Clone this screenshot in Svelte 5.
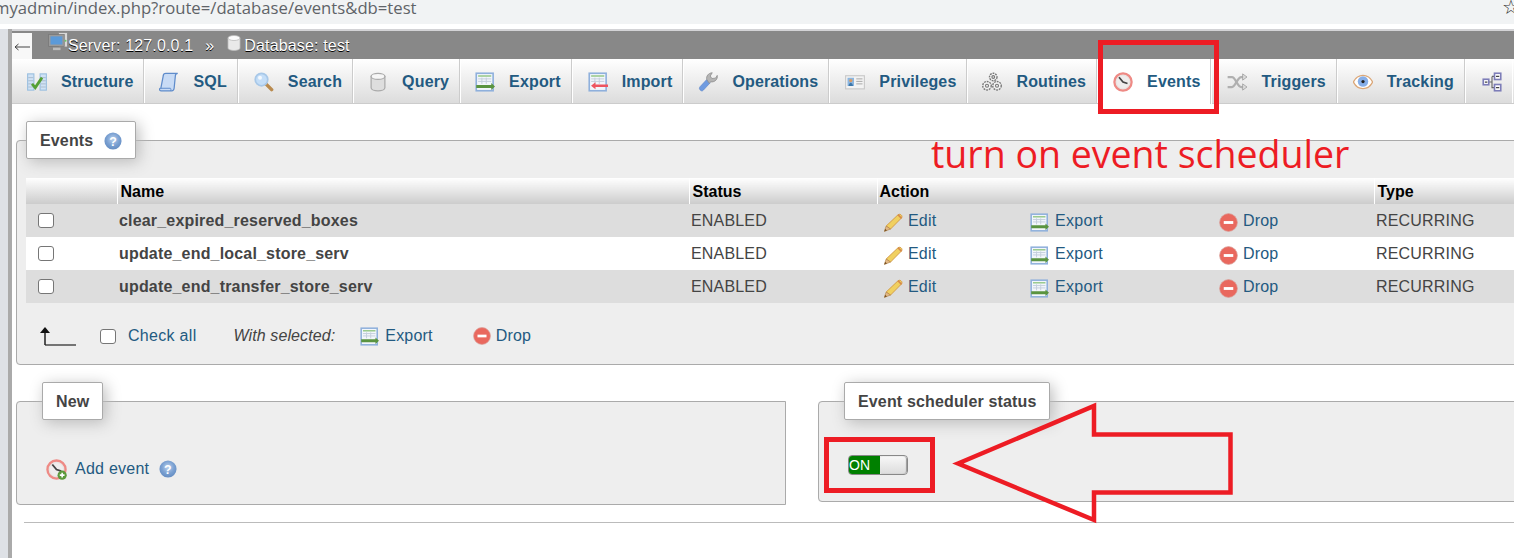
<script>
  const tabs = [
    ['Structure', 'structure'], ['SQL', 'sql'], ['Search', 'search'], ['Query', 'query'],
    ['Export', 'export'], ['Import', 'import'], ['Operations', 'operations'],
    ['Privileges', 'privileges'], ['Routines', 'routines'], ['Events', 'events'],
    ['Triggers', 'triggers'], ['Tracking', 'tracking']
  ];
  const events = ['clear_expired_reserved_boxes', 'update_end_local_store_serv', 'update_end_transfer_store_serv'];
</script>

{#snippet tableIcon(arrow)}
  <rect x="1" y="1" width="13.5" height="14" fill="#f2f6fb" stroke="#8fb0dc" stroke-width="1.3"/>
  <path d="M2.500 3.200h10.500" stroke="#8cc47c" stroke-width="1.100"/>
  <path d="M2.500 5.500h10.500M2.500 7.500h10.500M5.500 4.500v5M9 4.500v5" stroke="#c4cfdc" stroke-width=".8"/>
  {#if arrow === 'right'}
    <path d="M1 10.400h12V8.800l3 2.800-3 2.800v-1.600H1z" fill="#5a9440"/>
  {:else}
    <path d="M16 10h-10V8.200l-3.600 2.800 3.600 2.800V12h10z" fill="#ee5560"/>
  {/if}
{/snippet}

{#snippet clock()}
  <circle cx="8" cy="8" r="6.900" fill="#e9e4e2" stroke="#ee8a85" stroke-width="1.800"/>
  <circle cx="8" cy="8" r="5" fill="#efeded"/>
  <path d="M4.800 4.200 8 8l3.600 1.200" fill="none" stroke="#444" stroke-width="1.400"/>
{/snippet}

{#snippet icon(name, size = 20)}
  <svg class="ico" width={size} height={size} viewBox="0 0 16 16" aria-hidden="true">
    {#if name === 'structure'}
      <rect x="0.500" y="1.500" width="5" height="13" fill="#cfe2f5" stroke="#9cc0e0" stroke-width=".9"/>
      <rect x="10.500" y="1.500" width="5" height="13" fill="#cfe2f5" stroke="#9cc0e0" stroke-width=".9"/>
      <path d="M1 4.500h4M1 7h4M1 9.500h4M1 12h4M11 4.500h4M11 7h4M11 9.500h4M11 12h4" stroke="#a8b8c8" stroke-width=".7"/>
      <path d="M4 9.500l2.600 3L12 4.500" fill="none" stroke="#55a034" stroke-width="2.200"/>
    {:else if name === 'sql'}
      <path d="M3.500 2.500c0-1 1-1.500 2-1.500h9.500c-1 0-1.900 1-1.900 2l-1 10c-.1 1.300-1 2-2 2H1.500c-1 0-1.300-1-1-1.600.2-.3.6-.6 1-.6z" fill="#c8dbf5" stroke="#5f8ccb" stroke-width="1"/>
      <path d="M1.500 13h7.500c.6 0 .8 1.400.2 2" fill="none" stroke="#5f8ccb" stroke-width=".8"/>
    {:else if name === 'search'}
      <path d="M9.500 9.500l4.600 4.600" stroke="#b98a4e" stroke-width="2.800" stroke-linecap="round"/>
      <circle cx="6" cy="6" r="5" fill="#c4def8" stroke="#a8c8e8" stroke-width="1.400"/>
      <circle cx="4.800" cy="4.600" r="1.600" fill="#fff" opacity=".8"/>
    {:else if name === 'query'}
      <path d="M2.500 3.500v9c0 1.400 2.500 2.500 5.500 2.500s5.500-1.100 5.500-2.500v-9z" fill="#dedede" stroke="#aaa" stroke-width="1"/>
      <ellipse cx="8" cy="3.500" rx="5.500" ry="2.400" fill="#f6f6f6" stroke="#aaa" stroke-width="1"/>
    {:else if name === 'export'}
      {@render tableIcon('right')}
    {:else if name === 'import'}
      {@render tableIcon('left')}
    {:else if name === 'operations'}
      <path d="M2.200 14.800c-1.200-.8-1.400-2-.6-3l5.400-5.800 2.800 2.600-5.400 5.800c-.7.8-1.500 1-2.200.4z" fill="#6f9be0" stroke="#5a84c8" stroke-width=".5"/>
      <path d="M7 6c-.6-2.600 1.200-5.200 4.400-5.400l-1.600 2.600 1.300 2 2.900-.3 1.400-2.200c.6 2.800-1.700 5.600-5.200 5.200L9 9z" fill="#b4b4b4" stroke="#8c8c8c" stroke-width=".6"/>
    {:else if name === 'privileges'}
      <rect x="0.500" y="3" width="15" height="10.500" fill="#f3f3f3" stroke="#c8c8c8" stroke-width=".9"/>
      <rect x="2" y="4.600" width="5.200" height="6.600" fill="#8cb6df"/>
      <circle cx="4.600" cy="6.800" r="1.300" fill="#d99c66"/>
      <path d="M2.800 11.200c.2-2 1.400-2.600 1.800-2.600s1.600.6 1.800 2.600z" fill="#3d77aa"/>
      <path d="M9 5.500h5M9 7.500h5M9 9.500h5" stroke="#a9a9a9" stroke-width=".8"/>
    {:else if name === 'routines'}
      <g fill="#f2f2f2" stroke="#777" stroke-width="1.100">
        <circle cx="9" cy="4" r="3" stroke-dasharray="1.500 .7"/>
        <circle cx="4" cy="11" r="3.400" stroke-dasharray="1.500 .7"/>
        <circle cx="12" cy="11" r="3.400" stroke-dasharray="1.500 .7"/>
      </g>
      <g fill="none" stroke="#777" stroke-width=".9">
        <circle cx="9" cy="4" r="1.100"/><circle cx="4" cy="11" r="1.200"/><circle cx="12" cy="11" r="1.200"/>
      </g>
    {:else if name === 'events'}
      {@render clock()}
    {:else if name === 'triggers'}
      <g fill="none" stroke="#b0b0b0" stroke-width="1.800">
        <path d="M0.500 4h3.500c3 0 4 8 7.500 8h1.500"/><path d="M0.500 12h3.500c3 0 4-8 7.500-8h1.500"/>
      </g>
      <path d="M12.500 1.500 16 4l-3.500 2.500zM12.500 9.500 16 12l-3.500 2.500z" fill="#ddd" stroke="#999" stroke-width=".6"/>
    {:else if name === 'tracking'}
      <path d="M0.300 8C2.500 3.500 5 2.700 8 2.700s5.500.8 7.700 5.300c-2.200 4.500-4.700 5.300-7.700 5.300S2.500 12.500.3 8z" fill="#fff" stroke="#dba778" stroke-width="1.100"/>
      <circle cx="8" cy="7.600" r="4.200" fill="#86aee8"/>
      <circle cx="8" cy="7.600" r="1.300" fill="#222"/>
    {:else if name === 'more'}
      <path d="M5 8h3M8 3.500v9h2M8 3.500h2" fill="none" stroke="#666" stroke-width=".9"/>
      <g fill="#fff" stroke="#7d7db8" stroke-width="1.300">
        <rect x="1" y="5.800" width="4.400" height="4.400"/><rect x="10" y="1" width="5" height="5"/><rect x="10" y="10" width="5" height="5"/>
      </g>
      <path d="M2.300 8h2M11.200 3.500h2.600M11.200 12.500h2.600" stroke="#444" stroke-width="1"/>
    {:else if name === 'help'}
      <circle cx="8" cy="8" r="7.600" fill="url(#hg)"/>
      <text x="8" y="12" text-anchor="middle" font-size="11" font-weight="700" font-family="Liberation Sans" fill="#fff">?</text>
    {:else if name === 'edit'}
      <path d="M11.800 1.500c1-.8 2.300-.5 3 .5.500.8.400 1.700-.3 2.400L5.500 13.500 1.800 11z" fill="#f0d060" stroke="#d39c48" stroke-width=".8"/>
      <path d="M1.800 11 .3 15.500l5.200-2z" fill="#e3b985" stroke="#a97a3c" stroke-width=".5"/>
      <path d="M.3 15.500l.7-2.300 1.500 1.500z" fill="#7a5428"/>
      <path d="M11.800 1.500l3 3" stroke="#d68a4a" stroke-width="1.400"/>
    {:else if name === 'drop'}
      <circle cx="8" cy="8" r="7.500" fill="#e9685e" stroke="#d9a29c" stroke-width=".6"/>
      <rect x="4" y="6.800" width="8" height="2.400" fill="#fff"/>
    {:else if name === 'add'}
      {@render clock()}
      <circle cx="12.300" cy="12.300" r="3.500" fill="#5c9a3c"/>
      <path d="M10.500 12.300h3.600M12.300 10.500v3.600" stroke="#fff" stroke-width="1.200"/>
    {:else if name === 'server'}
      <rect x="8.500" y="0.500" width="7" height="11.500" fill="#d8d8d8" stroke="#888" stroke-width=".6"/>
      <rect x="0.500" y="2" width="12.500" height="9.500" fill="#9a9a9a" stroke="#777" stroke-width=".6"/>
      <rect x="2" y="3.500" width="9.500" height="6.500" fill="#5b9ad9"/>
      <path d="M4 13.500h6" stroke="#bbb" stroke-width="2"/>
      <circle cx="14" cy="7" r=".8" fill="#6c6"/>
    {:else if name === 'db'}
      <path d="M2 3v10c0 1.400 2.700 2.500 6 2.500s6-1.100 6-2.500V3z" fill="#e9e9e9" stroke="#bbb" stroke-width=".8"/>
      <ellipse cx="8" cy="3" rx="6" ry="2.500" fill="#fbfbfb" stroke="#bbb" stroke-width=".8"/>
    {/if}
  </svg>
{/snippet}

<div class="page">
  <svg class="defs" width="0" height="0" aria-hidden="true">
    <defs><radialGradient id="hg" cx=".5" cy=".4" r=".65"><stop offset="0" stop-color="#bcd2ee"/><stop offset=".55" stop-color="#7ba1d2"/><stop offset="1" stop-color="#5f88bf"/></radialGradient></defs>
  </svg>
  <div class="urlbar">
    <span class="url">myadmin/index.php?route=/database/events&amp;db=test</span>
    <span class="star">☆</span>
  </div>
  <div class="gap"></div>
  <div class="frame">
    <div class="strip"></div>
    <main class="main">
      <div class="crumbs">
        <span class="back">
          <svg width="16" height="8" viewBox="0 0 16 8" aria-hidden="true"><path d="M1 4h15M4.500 1 1 4l3.500 3" fill="none" stroke="#444" stroke-width="1"/></svg>
        </span>
        <span class="crumb server">{@render icon('server', 20)}<span>Server: 127.0.0.1</span></span>
        <span class="sep">»</span>
        <span class="crumb db">{@render icon('db', 16)}<span>Database: test</span></span>
      </div>

      <nav class="tabs">
        {#each tabs as [label, ic]}
          <a class="tab" class:active={label === 'Events'} href="#top">
            {@render icon(ic, 20)}<span>{label}</span>
          </a>
        {/each}
        <a class="tab more" href="#top" aria-label="More">{@render icon('more', 20)}</a>
      </nav>

      <div class="content">
        <fieldset class="box events">
          <legend>Events {@render icon('help', 18)}</legend>
          <table>
            <colgroup>
              <col class="c-check"/><col class="c-name"/><col class="c-status"/>
              <col class="c-edit"/><col class="c-export"/><col class="c-drop"/><col class="c-type"/>
            </colgroup>
            <thead>
              <tr>
                <th></th><th>Name</th><th>Status</th><th class="th-action" colspan="3">Action</th><th>Type</th>
              </tr>
            </thead>
            <tbody>
              {#each events as ev}
                <tr>
                  <td class="td-check"><input type="checkbox" /></td>
                  <td class="td-name">{ev}</td>
                  <td>ENABLED</td>
                  <td class="td-edit"><a href="#top">{@render icon('edit', 19)}Edit</a></td>
                  <td><a class="wide" href="#top">{@render icon('export', 19)}Export</a></td>
                  <td><a href="#top">{@render icon('drop', 19)}Drop</a></td>
                  <td>RECURRING</td>
                </tr>
              {/each}
            </tbody>
          </table>
          <div class="actions">
            <svg class="ltr" width="36" height="20" viewBox="0 0 36 20" aria-hidden="true">
              <path d="M5 19V5" stroke="#111" stroke-width="1.400" fill="none"/>
              <path d="M0 7l5-6 5 6z" fill="#111"/>
              <path d="M5 19h31" stroke="#222" stroke-width="1.200"/>
            </svg>
            <label class="checkall"><input type="checkbox" /><span>Check all</span></label>
            <em>With selected:</em>
            <a class="act-export" href="#top">{@render icon('export', 19)}Export</a>
            <a class="act-drop" href="#top">{@render icon('drop', 18)}Drop</a>
          </div>
        </fieldset>

        <div class="lower">
          <fieldset class="box new">
            <legend>New</legend>
            <a class="add" href="#top">{@render icon('add', 21)}Add event<span class="addhelp">{@render icon('help', 18)}</span></a>
          </fieldset>
          <fieldset class="box sched">
            <legend>Event scheduler status</legend>
            <div class="toggle"><span class="on">ON</span><span class="knob"></span></div>
          </fieldset>
        </div>
        <hr />
      </div>
    </main>
  </div>

  <svg class="marks" width="1514" height="558" viewBox="0 0 1514 558" aria-hidden="true">
    <g fill="none" stroke="#ed1c24" stroke-width="5">
      <rect x="1100.500" y="42.500" width="116" height="69"/>
      <rect x="826.500" y="439.500" width="106" height="51"/>
      <path d="M958 463.500 1094 406v28.500h136.500v58H1094V520z" stroke-width="4.500" stroke-linejoin="miter"/>
    </g>
  </svg>
  <div class="note">turn on event scheduler</div>
</div>

<style>
  :global(body) { margin: 0; background: #fff; }
  .page {
    position: relative; width: 1514px; height: 558px; overflow: hidden;
    font-family: "Liberation Sans", Arial, sans-serif; font-size: 16px; color: #444;
  }
  .defs { position: absolute; }
  a { color: #235a81; text-decoration: none; }
  .urlbar {
    height: 24px; background: #f1f3f4; display: flex; justify-content: space-between;
    overflow: hidden;
  }
  .url {
    font-family: "Open Sans", sans-serif; font-size: 16.700px; line-height: 16px; color: #5f6368;
    margin-left: -6px; white-space: nowrap;
  }
  .star { font-family: "DejaVu Sans", sans-serif; font-size: 20px; line-height: 14px; color: #333; margin-right: -6px; }
  .gap { height: 5px; background: #fff; }
  .frame { display: flex; height: 529px; }
  .strip { width: 8px; flex: none; background: #dee1e6; border-right: 4px solid #aaa; }
  .main { flex: 1; min-width: 0; border-top: 2px solid #d3d3d6; overflow: hidden; }

  .crumbs {
    height: 28px; background: #888; display: flex; align-items: center; color: #fff;
    text-shadow: 0 1px 0 #000; font-size: 16px; letter-spacing: .15px; white-space: nowrap;
  }
  .crumbs > span:not(.back) > span, .sep { padding-top: 2px; }
  .back {
    width: 20px; height: 26px; background: #f8f8f8; display: flex; align-items: center;
    justify-content: center; margin-top: 1px; padding-top: 2px; box-sizing: border-box;
  }
  .crumb { display: flex; align-items: center; }
  .server { margin-left: 16px; }
  .server .ico { margin-top: -6px; }
  .sep { margin: 0 12px 0 12px; }
  .db .ico { margin-top: -5px; margin-right: 2px; }

  .tabs {
    display: flex; height: 45px; border-bottom: 1px solid #ccc; box-sizing: border-box;
    background: linear-gradient(#fff, #dcdcdc);
  }
  .tab {
    display: flex; align-items: center; gap: 14px; flex: none; box-sizing: border-box;
    padding: 1px 10px 0 15px; border-right: 1px solid #ccc; box-shadow: 1px 0 0 #fff;
    margin-right: 1px; font-weight: 700; white-space: nowrap; letter-spacing: .15px;
  }
  .tab:nth-child(1), .tab:nth-child(3), .tab:nth-child(4), .tab:nth-child(6), .tab:nth-child(8) { margin-right: 0; }
  .tab.active { background: #fff; margin-bottom: -1px; border-right-color: #ccc; }
  .tab.more { border-right: 0; padding-left: 16px; }
  .ico { flex: none; display: block; }

  .content { padding: 17px 0 0 4px; }
  .box {
    margin: 0; min-width: 0; background: #eee; border: 1px solid #aaa; border-radius: 4px 0 0 4px;
    box-sizing: border-box;
  }
  legend {
    display: flex; align-items: center; gap: 11px; padding: 10px 12.500px 8px 13px; height: 38px; box-sizing: border-box;
    background: #fff; border: 1px solid #aaa; border-radius: 2px; font-weight: 700; color: #444;
    box-shadow: 3px 3px 15px #bbb; white-space: nowrap; letter-spacing: .15px;
  }
  .events { width: 1600px; padding: 19px 0 0 9px; height: 244px; }
  table { border-collapse: collapse; table-layout: fixed; width: 1490px; }
  .c-check { width: 91px; } .c-name { width: 572px; } .c-status { width: 188px; }
  .c-edit { width: 151px; } .c-export { width: 189px; } .c-drop { width: 157px; } .c-type { width: 142px; }
  th {
    height: 26px; padding: 1px 0 0 3px; text-align: left; color: #000; font-weight: 700; box-sizing: border-box;
    background: linear-gradient(#fff, #ccc); border-left: 1px solid #fff;
  }
  th:first-child { border-left: 0; }
  th.th-action { padding-left: 2px; }
  td {
    height: 33px; padding: 0 0 0 2px; box-sizing: border-box; white-space: nowrap; overflow: hidden;
    letter-spacing: .18px;
  }
  td a { display: flex; align-items: center; gap: 5px; }
  td a.wide { gap: 6px; letter-spacing: .3px; }
  tbody tr:nth-child(odd) { background: #ddd; }
  tbody tr:nth-child(even) { background: #fff; }
  .td-name { font-weight: 700; }
  .td-edit { padding-left: 7px; }
  td a .ico { margin-top: 2px; margin-bottom: -2px; }
  .td-check { padding-left: 12px; }
  input[type="checkbox"] {
    appearance: none; width: 16px; height: 15px; margin: 0; display: block; background: #fff;
    border: 1px solid #767676; border-radius: 3px; box-sizing: border-box;
  }

  .actions {
    display: flex; align-items: center; height: 64px; padding: 2px 0 0 14px; box-sizing: border-box;
    letter-spacing: .2px;
  }
  .ltr { margin-top: -1px; }
  .checkall { display: flex; align-items: center; gap: 12px; margin-left: 24px; color: #235a81; letter-spacing: .3px; }
  .actions em { margin-left: 37px; letter-spacing: .1px; }
  .actions a { display: inline-flex; align-items: center; gap: 6px; }
  .act-export { margin-left: 25px; }
  .actions .act-drop { margin-left: 40px; gap: 5px; }

  .lower { display: flex; gap: 32px; margin-top: 17px; align-items: flex-start; }
  .new { width: 770px; flex: none; padding: 39px 0 25px 25px; }
  .sched { width: 800px; flex: none; padding: 35px 0 26px 25px; }
  .add { display: flex; align-items: center; gap: 8px; height: 20px; margin-left: 4px; letter-spacing: .25px; }
  .addhelp { margin-left: 2px; }
  .toggle {
    width: 60px; height: 20px; box-sizing: border-box; display: flex; overflow: hidden;
    border: 1px solid #888; border-radius: 4px; margin-left: 4px;
  }
  .on { width: 31px; background: #008000; color: #fff; font-size: 14px; line-height: 18px; box-sizing: border-box; }
  .knob { flex: 1; background: linear-gradient(#f8f8f8, #dcdcdc); border-radius: 3px; box-shadow: inset -1px 0 1px #999; }
  hr { margin: 17px 0 0 8px; border: 0; border-top: 1px solid #bbb; }

  .marks { position: absolute; left: 0; top: 0; pointer-events: none; }
  .note {
    position: absolute; left: 931px; top: 129px; color: #ed1c24; white-space: nowrap;
    font-family: "Open Sans", sans-serif; font-size: 37.500px; line-height: 50px;
  }
</style>
